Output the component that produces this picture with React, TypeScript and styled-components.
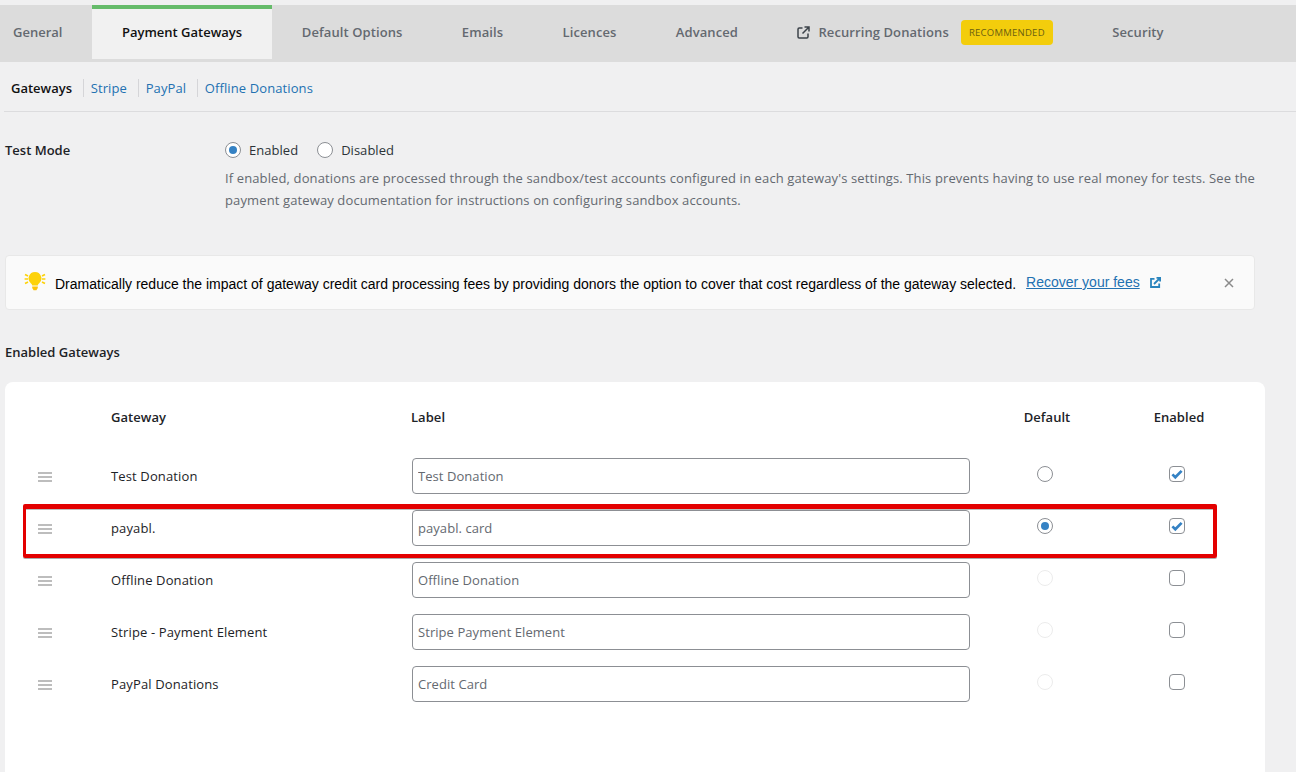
import React from "react";
import styled, { createGlobalStyle } from "styled-components";

const Global = createGlobalStyle`
  html, body { margin: 0; padding: 0; background: #f0f0f1; height: 772px; overflow: hidden; }
  body { font-family: "Open Sans", "Noto Sans", sans-serif; font-size: 13px; color: #1d2327; }
  * { box-sizing: border-box; }
`;

const Page = styled.div`
  position: relative;
  width: 1296px;
  height: 772px;
  overflow: hidden;
  padding-top: 5px;
`;

const TabBar = styled.nav`
  display: flex;
  align-items: flex-start;
  height: 57px;
  background: #dcdcdc;
  padding-left: 13px;
`;

const Tab = styled.a<{ $active?: boolean; $first?: boolean }>`
  display: flex;
  align-items: center;
  height: 54px;
  padding: 0 ${(p) => (p.$active ? "30px" : p.$first ? "29.5px" : "29.7px")} 4px ${(p) => (p.$first ? "0" : p.$active ? "30px" : "29.7px")};
  font-size: 13px;
  letter-spacing: ${(p) => (p.$first || p.$active ? "0" : "0.09px")};
  font-weight: 600;
  white-space: nowrap;
  color: ${(p) => (p.$active ? "#111" : "#646970")};
  background: ${(p) => (p.$active ? "#f1f1f1" : "transparent")};
  border-top: 4px solid ${(p) => (p.$active ? "#65bb6a" : "transparent")};
`;

const TabIcon = styled.svg`
  width: 13px;
  height: 13px;
  margin-right: 8px;
  flex: none;
`;

const Badge = styled.span`
  display: inline-flex;
  align-items: center;
  justify-content: center;
  width: 92px;
  height: 25px;
  margin-left: 12px;
  border-radius: 4px;
  background: #f3cd0c;
  color: #6b5f10;
  font-size: 9.5px;
  font-weight: 400;
  letter-spacing: 0.25px;
`;

const SubNav = styled.ul`
  display: flex;
  align-items: center;
  height: 50px;
  margin: 0 0 0 4px;
  padding: 2px 0 0 7px;
  list-style: none;
  border-bottom: 1px solid #dcdcde;
`;

const SubItem = styled.li<{ $current?: boolean }>`
  font-size: 13px;
  letter-spacing: ${(p) => (p.$current ? "0" : "0.1px")};
  font-weight: ${(p) => (p.$current ? 600 : 400)};
  color: ${(p) => (p.$current ? "#111" : "#2271b1")};
  line-height: 18px;
  padding-right: 11px;
  margin-right: 6.7px;
  border-right: 1px solid #d5d5d8;
  &:last-child { border-right: 0; }
`;

const Main = styled.main`
  padding-left: 5px;
`;

const TestMode = styled.section`
  display: grid;
  grid-template-columns: 220px 1040px;
  padding-top: 28px;
`;

const FieldLabel = styled.div`
  font-weight: 600;
  font-size: 13px;
  line-height: 20px;
`;

const RadioRow = styled.div`
  display: flex;
  align-items: center;
  height: 20px;
`;

const RadioLabel = styled.label`
  display: flex;
  align-items: center;
  gap: 8px;
  margin-right: 19px;
  letter-spacing: 0.03px;
  color: #2c3338;
`;

const Radio = styled.span<{ $on?: boolean; $off?: boolean }>`
  display: block;
  position: relative;
  width: 16px;
  height: 16px;
  border-radius: 50%;
  background: #fff;
  border: 1px solid ${(p) => (p.$off ? "#ececec" : "#8c8f94")};
  flex: none;
  &::before {
    content: "";
    display: ${(p) => (p.$on ? "block" : "none")};
    position: absolute;
    left: 3px;
    top: 3px;
    width: 8px;
    height: 8px;
    border-radius: 50%;
    background: #3582c4;
  }
`;

const Help = styled.p`
  margin: 7px 0 0;
  font-size: 13px;
  line-height: 22px;
  letter-spacing: 0.122px;
  color: #646970;
  white-space: nowrap;
`;

const Notice = styled.div`
  display: flex;
  align-items: center;
  width: 1250px;
  height: 55px;
  margin-top: 44px;
  padding: 3px 18px 0;
  background: #fafafa;
  border: 1px solid #e8e8e8;
  border-radius: 4px;
  font-family: "Liberation Sans", Arial, sans-serif;
  font-size: 14px;
  color: #000;
  white-space: nowrap;
`;

const Bulb = styled.svg`
  width: 22px;
  height: 19px;
  margin-right: 9px;
  margin-top: -6px;
  flex: none;
`;

const NoticeLink = styled.a`
  margin-left: 10px;
  margin-top: -4px;
  color: #2271b1;
  text-decoration: underline;
`;

const LinkIcon = styled.svg`
  width: 11px;
  height: 11px;
  margin-left: 10px;
  margin-top: -4px;
  flex: none;
`;

const Close = styled.svg`
  width: 10px;
  height: 10px;
  margin-left: auto;
  margin-right: 2px;
  margin-top: -3px;
  flex: none;
`;

const SectionTitle = styled.h3`
  margin: 33px 0 0;
  font-size: 13px;
  font-weight: 600;
  line-height: 18px;
  color: #1d2327;
`;

const Card = styled.section`
  width: 1260px;
  height: 500px;
  margin-top: 21px;
  padding-top: 25px;
  background: #fff;
  border-radius: 8px;
`;

const columns = "106px 300px 567px 138px 126px";

const HeadRow = styled.div`
  display: grid;
  grid-template-columns: ${columns};
  height: 51px;
  font-weight: 600;
  font-size: 13px;
  letter-spacing: 0.05px;
  line-height: 20px;
  color: #1d2327;
`;

const HeadCentered = styled.div`
  text-align: center;
`;

const Row = styled.div`
  display: grid;
  grid-template-columns: ${columns};
  align-items: center;
  height: 52px;
  padding-bottom: 16px;
  letter-spacing: 0.13px;
`;

const Handle = styled.span`
  display: block;
  width: 14px;
  height: 10px;
  margin: 1px 0 0 33px;
  border-top: 2px solid #bdbdbd;
  border-bottom: 2px solid #bdbdbd;
  position: relative;
  &::before {
    content: "";
    position: absolute;
    left: 0;
    right: 0;
    top: 2px;
    height: 2px;
    background: #bdbdbd;
  }
`;

const GatewayName = styled.div`
  color: #1d2327;
`;

const TextInput = styled.input`
  display: block;
  width: 558px;
  height: 36px;
  margin-left: 1px;
  padding: 0 5px;
  border: 1px solid #8c8f94;
  border-radius: 4px;
  background: #fff;
  font: inherit;
  letter-spacing: 0.06px;
  color: #646970;
  outline: none;
`;

const CenterCell = styled.div`
  display: flex;
  justify-content: center;
  margin: -4px 0 0 -4px;
`;

const Checkbox = styled.span`
  display: flex;
  align-items: center;
  justify-content: center;
  width: 16px;
  height: 16px;
  background: #fff;
  border: 1px solid #8c8f94;
  border-radius: 4px;
  flex: none;
`;

const Highlight = styled.div`
  position: absolute;
  left: 23px;
  top: 504px;
  width: 1194px;
  height: 54px;
  border-style: solid;
  border-color: #e30000;
  border-width: 5px 4px 4px 3px;
  border-radius: 2px;
  box-shadow: inset 0 1px 0 rgba(90, 90, 90, 0.4), 0 1px 0 rgba(90, 90, 90, 0.5);
  pointer-events: none;
`;

const gateways = [
  { name: "Test Donation", label: "Test Donation", radio: "off", checked: true },
  { name: "payabl.", label: "payabl. card", radio: "on", checked: true },
  { name: "Offline Donation", label: "Offline Donation", radio: "disabled", checked: false },
  { name: "Stripe - Payment Element", label: "Stripe Payment Element", radio: "disabled", checked: false },
  { name: "PayPal Donations", label: "Credit Card", radio: "disabled", checked: false },
];

const Check = () => (
  <svg width="14" height="14" viewBox="0 0 14 14" aria-hidden="true">
    <path d="M2.4 7.4L5.3 10.3L11.6 3.9" fill="none" stroke="#3582c4" strokeWidth="2.7" />
  </svg>
);

export default function App() {
  return (
    <Page>
      <Global />
      <TabBar>
        <Tab $first>General</Tab>
        <Tab $active>Payment Gateways</Tab>
        <Tab>Default Options</Tab>
        <Tab>Emails</Tab>
        <Tab>Licences</Tab>
        <Tab>Advanced</Tab>
        <Tab>
          <TabIcon viewBox="0 0 13 13" fill="none" stroke="#3c434a" strokeWidth="1.5" aria-hidden="true">
            <path d="M5.5 2H2.2C1.5 2 1 2.5 1 3.2V10.8C1 11.5 1.5 12 2.2 12H9.8C10.5 12 11 11.5 11 10.8V7.5" />
            <path d="M5.5 7.5L11.5 1.5M7.5 1H12V5.5" />
          </TabIcon>
          Recurring Donations
          <Badge>RECOMMENDED</Badge>
        </Tab>
        <Tab>Security</Tab>
      </TabBar>
      <SubNav>
        <SubItem $current>Gateways</SubItem>
        <SubItem>Stripe</SubItem>
        <SubItem>PayPal</SubItem>
        <SubItem>Offline Donations</SubItem>
      </SubNav>
      <Main>
        <TestMode>
          <FieldLabel>Test Mode</FieldLabel>
          <div>
            <RadioRow>
              <RadioLabel><Radio $on />Enabled</RadioLabel>
              <RadioLabel><Radio />Disabled</RadioLabel>
            </RadioRow>
            <Help>
              If enabled, donations are processed through the sandbox/test accounts configured in each gateway's settings. This prevents having to use real money for tests. See the
              <br />
              payment gateway documentation for instructions on configuring sandbox accounts.
            </Help>
          </div>
        </TestMode>
        <Notice>
          <Bulb viewBox="0 0 22 19" aria-hidden="true">
            <path d="M11 0a6.4 6.4 0 0 0-4 11.4c.9.8 1.1 1.2 1.2 2.1h5.6c.1-.9.3-1.3 1.2-2.1A6.4 6.4 0 0 0 11 0z" fill="#fdd20a" />
            <path d="M8.2 14.4h5.6v1.6l-1.4 2.2h-2.8l-1.4-2.2z" fill="#fdc30a" />
            <path d="M1 2.4l3 1.6M0.6 7h3.4M1 11.6l3-1.6M21 2.4l-3 1.6M21.4 7H18M21 11.6l-3-1.6" stroke="#fdd20a" strokeWidth="1.7" fill="none" />
          </Bulb>
          Dramatically reduce the impact of gateway credit card processing fees by providing donors the option to cover that cost regardless of the gateway selected.
          <NoticeLink>Recover your fees</NoticeLink>
          <LinkIcon viewBox="0 0 11 11" fill="none" stroke="#2a84bd" strokeWidth="1.8" aria-hidden="true">
            <path d="M4.5 1.8H1v8.2h8.2V6.5" />
            <path d="M4 7L10 1M6.5 .9H10.1V4.5" />
          </LinkIcon>
          <Close viewBox="0 0 10 10" stroke="#8a8a8a" strokeWidth="1.5" aria-hidden="true">
            <path d="M1 1L9 9M9 1L1 9" />
          </Close>
        </Notice>
        <SectionTitle>Enabled Gateways</SectionTitle>
        <Card>
          <HeadRow>
            <div />
            <div>Gateway</div>
            <div>Label</div>
            <HeadCentered>Default</HeadCentered>
            <HeadCentered>Enabled</HeadCentered>
          </HeadRow>
          {gateways.map((g) => (
            <Row key={g.name}>
              <Handle />
              <GatewayName>{g.name}</GatewayName>
              <TextInput readOnly value={g.label} />
              <CenterCell>
                <Radio $on={g.radio === "on"} $off={g.radio === "disabled"} />
              </CenterCell>
              <CenterCell>
                <Checkbox>{g.checked && <Check />}</Checkbox>
              </CenterCell>
            </Row>
          ))}
        </Card>
      </Main>
      <Highlight />
    </Page>
  );
}
